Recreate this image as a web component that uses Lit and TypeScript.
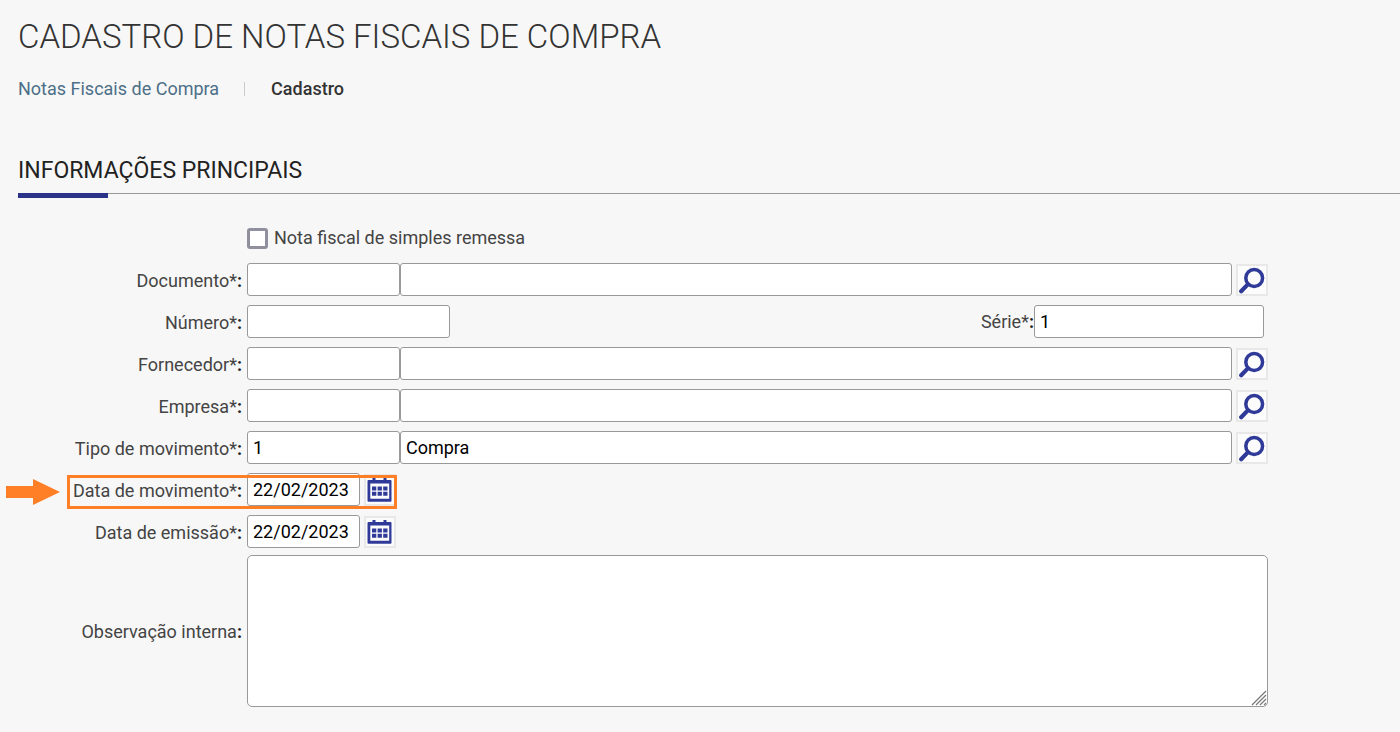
import { LitElement, html, css } from "lit";
import { customElement, property } from "lit/decorators.js";

@customElement("icon-button")
class IconButton extends LitElement {
  @property() icon = "search";
  @property() label = "";

  static styles = css`
    :host {
      display: block;
      flex: none;
      align-self: flex-end;
    }
    .button {
      display: block;
      box-sizing: border-box;
      width: 32px;
      height: 32px;
      padding: 0;
      border: 2px solid #e8e8e8;
      background: #fcfcfd;
      cursor: pointer;
    }
    .glyph {
      display: block;
      width: 28px;
      height: 28px;
    }
  `;

  render() {
    return html`<button class="button" type="button" aria-label=${this.label}>
      ${this.icon === "search"
        ? html`<svg class="glyph" viewBox="0 0 28 28" fill="none" stroke="#2f3a98">
            <circle cx="16.2" cy="12" r="8.4" stroke-width="3.500" />
            <path d="M9.800 18.400 3.200 25.200" stroke-width="4.200" stroke-linecap="round" />
          </svg>`
        : html`<svg class="glyph" viewBox="0 0 28 28" fill="#2f3a98">
            <path
              fill-rule="evenodd"
              d="M1.500 5q0-1 1-1H6.500V2h3v2h8V2h3v2h4q1 0 1 1V24.800q0 1-1 1h-22q-1 0-1-1ZM4.300 7.500v15.200h18.900V7.500Z"
            />
            <path d="M6 10.500h4.300v4H6zM11.600 10.500h4.300v4h-4.300zM17.200 10.500h4.300v4h-4.300zM6 15.800h4.300v4H6zM11.600 15.800h4.300v4h-4.300zM17.200 15.800h4.300v4h-4.300z" />
          </svg>`}
    </button>`;
  }
}

interface Lookup {
  id: string;
  label: string;
  code: string;
  name: string;
}

@customElement("app-root")
class AppRoot extends LitElement {
  static styles = css`
    :host {
      display: block;
      box-sizing: border-box;
      min-height: 100vh;
      padding: 16px 0 24px 18px;
      background: #f7f7f7;
      color: #444;
      font-family: Roboto, sans-serif;
      font-size: 18px;
      line-height: 24px;
    }
    .title {
      margin: 0;
      color: #333;
      font-size: 33px;
      font-weight: 300;
      line-height: 42px;
    }
    .crumbs {
      display: flex;
      align-items: center;
      margin-top: 19px;
    }
    .crumb-link {
      color: #4c6f87;
      text-decoration: none;
    }
    .divider {
      width: 1px;
      height: 14px;
      margin: 0 26px 0 25px;
      background: #ccc;
    }
    .current {
      color: #333;
      font-weight: 500;
    }
    .section {
      margin: 54px 0 0;
      border-bottom: 1px solid #999;
      color: #222;
      font-size: 23px;
      font-weight: 400;
      line-height: 32px;
      padding-bottom: 6px;
    }
    .accent {
      width: 90px;
      height: 5px;
      margin-top: -1px;
      background: #2b3388;
    }
    .form {
      display: flex;
      flex-direction: column;
      gap: 9px;
      margin-top: 28px;
      padding-right: 132px;
    }
    .row {
      position: relative;
      display: grid;
      grid-template-columns: 224px minmax(0, 1fr);
      column-gap: 5px;
      align-items: center;
    }
    .label {
      padding-top: 2px;
      text-align: right;
    }
    .colon {
      color: #222;
      font-weight: 700;
    }
    .field {
      display: flex;
      align-items: center;
    }
    .check-field {
      display: flex;
      grid-column: 2;
      align-items: center;
      gap: 6px;
      padding-bottom: 4px;
    }
    .check {
      appearance: none;
      box-sizing: border-box;
      width: 21px;
      height: 21px;
      margin: 0;
      border: 3px solid #8f8f9d;
      border-radius: 3px;
      background: #fff;
    }
    .check:checked {
      background: #2b3595;
    }
    .box {
      box-sizing: border-box;
      min-width: 0;
      height: 33px;
      margin: 0;
      padding: 0 5px;
      border: 1px solid #999;
      border-radius: 3px;
      background: #fff;
      color: #000;
      font: inherit;
    }
    .code {
      width: 153px;
    }
    .name {
      flex: 1;
      margin-right: 4px;
    }
    .number {
      width: 203px;
    }
    .series-label {
      margin-left: auto;
    }
    .series {
      width: 230px;
      margin-right: 4px;
    }
    .date {
      width: 113px;
      margin-right: 4px;
    }
    .notes-wrap {
      position: relative;
      display: flex;
    }
    .notes {
      flex: 1;
      height: 152px;
      padding: 5px;
      border-radius: 5px;
      resize: none;
    }
    .grip {
      position: absolute;
      right: 1px;
      bottom: 1px;
      width: 16px;
      height: 16px;
    }
    .notes-row {
      margin-top: -2px;
    }
    .highlight {
      position: absolute;
      box-sizing: border-box;
      top: 2px;
      left: 49px;
      width: 330px;
      height: 34px;
      border: 3px solid #ff7f27;
      pointer-events: none;
    }
    .arrow {
      position: absolute;
      top: 6px;
      left: -12px;
      width: 54px;
      height: 26px;
    }
  `;

  private lookup({ id, label, code, name }: Lookup) {
    return html`<div class="row">
      <label class="label" for=${id}>${label}*<span class="colon">:</span></label>
      <div class="field">
        <input class="box code" id=${id} .value=${code} />
        <input class="box name" aria-label=${`${label}: nome`} .value=${name} />
        <icon-button icon="search" label=${`Pesquisar ${label}`}></icon-button>
      </div>
    </div>`;
  }

  private date(id: string, label: string, marked: boolean) {
    return html`<div class="row">
      <label class="label" for=${id}>${label}*<span class="colon">:</span></label>
      <div class="field">
        <input class="box date" id=${id} value="22/02/2023" />
        <icon-button icon="calendar" label="Abrir calendário"></icon-button>
      </div>
      ${marked
        ? html`<div class="highlight"></div>
            <svg class="arrow" viewBox="0 0 54 26" aria-hidden="true">
              <path fill="#ff7f27" d="M0 7h27V0l27 13-27 13v-7H0z" />
            </svg>`
        : null}
    </div>`;
  }

  render() {
    return html`
      <h1 class="title">CADASTRO DE NOTAS FISCAIS DE COMPRA</h1>
      <nav class="crumbs">
        <a class="crumb-link" href="#">Notas Fiscais de Compra</a>
        <span class="divider"></span>
        <span class="current">Cadastro</span>
      </nav>
      <h2 class="section">INFORMAÇÕES PRINCIPAIS</h2>
      <div class="accent"></div>
      <form class="form">
        <div class="row">
          <div class="check-field">
            <input class="check" type="checkbox" id="remessa" />
            <label for="remessa">Nota fiscal de simples remessa</label>
          </div>
        </div>
        ${this.lookup({ id: "documento", label: "Documento", code: "", name: "" })}
        <div class="row">
          <label class="label" for="numero">Número*<span class="colon">:</span></label>
          <div class="field">
            <input class="box number" id="numero" />
            <label class="series-label" for="serie">Série*<span class="colon">:</span></label>
            <input class="box series" id="serie" value="1" />
          </div>
        </div>
        ${this.lookup({ id: "fornecedor", label: "Fornecedor", code: "", name: "" })}
        ${this.lookup({ id: "empresa", label: "Empresa", code: "", name: "" })}
        ${this.lookup({ id: "tipo", label: "Tipo de movimento", code: "1", name: "Compra" })}
        ${this.date("movimento", "Data de movimento", true)}
        ${this.date("emissao", "Data de emissão", false)}
        <div class="row notes-row">
          <label class="label" for="observacao">Observação interna<span class="colon">:</span></label>
          <div class="notes-wrap">
            <textarea class="box notes" id="observacao"></textarea>
            <svg class="grip" viewBox="0 0 16 16" fill="none" stroke="#777" aria-hidden="true">
              <path d="M1 15 15 1M5 15 15 5M9 15 15 9M13 15l2-2" stroke-width="1.200" />
            </svg>
          </div>
        </div>
      </form>
    `;
  }
}
